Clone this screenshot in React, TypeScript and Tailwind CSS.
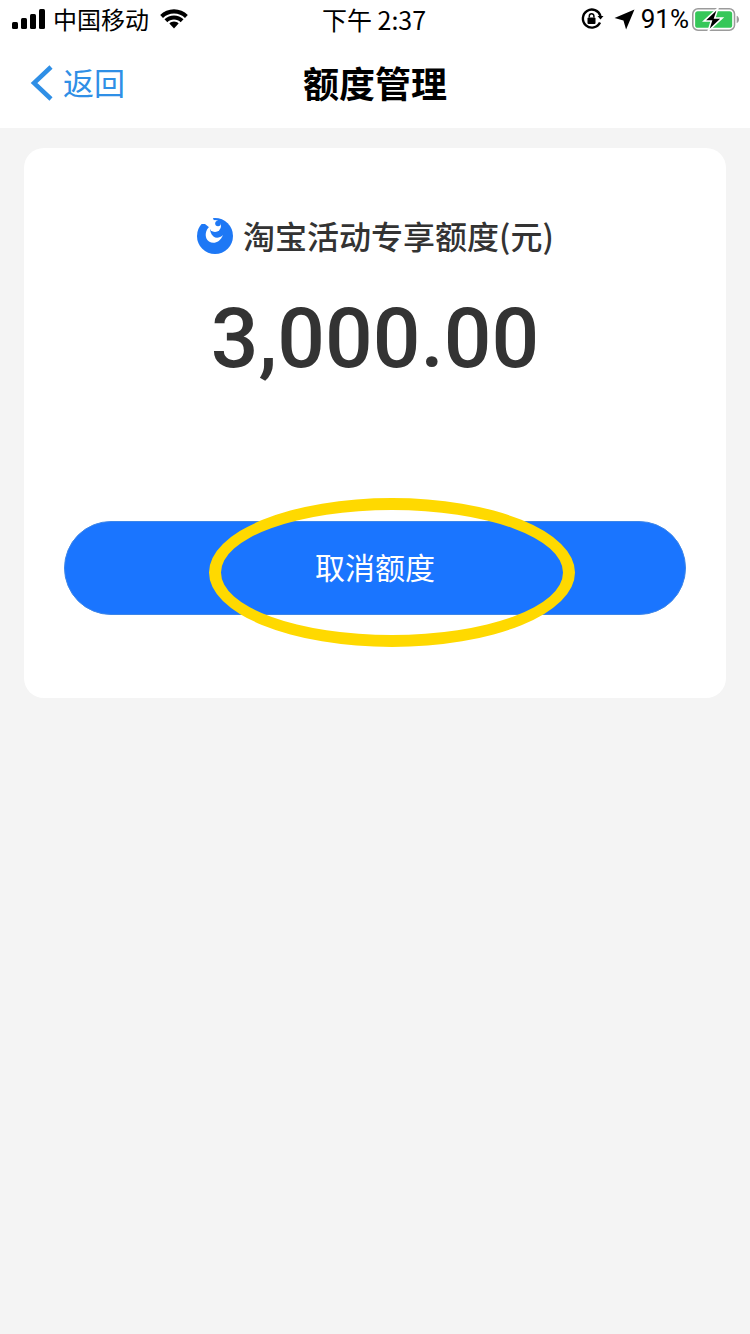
const CJK = "font-['Noto_Sans_CJK_SC','Noto_Sans',sans-serif]"

function StatusBar() {
  return (
    <div className="flex h-10 items-center justify-between pl-3 pr-[10px] text-black">
      <div className="flex w-[240px] -translate-y-px items-center">
        <svg width="34" height="20" viewBox="0 0 34 20" fill="#000">
          <rect x="0" y="13" width="6" height="7" rx="1.5" />
          <rect x="9" y="9" width="6" height="11" rx="1.5" />
          <rect x="18" y="5" width="6" height="15" rx="1.5" />
          <rect x="27" y="0" width="6" height="20" rx="1.5" />
        </svg>
        <span className={`ml-[7px] text-[24px] leading-none ${CJK}`}>中国移动</span>
        <svg className="ml-[10px] translate-y-px" width="30" height="22" viewBox="0 0 30 22" fill="#000">
          <path d="M15 4.500c4.300 0 8.200 1.700 11 4.500l2.800-3C25.200 2.400 20.400 0.300 15 0.300S4.800 2.400 1.200 6L4 9c2.800-2.800 6.700-4.500 11-4.500z" />
          <path d="M15 10.500c2.600 0 5 1 6.700 2.700l2.800-3C22 7.800 18.700 6.400 15 6.400S8 7.800 5.500 10.200l2.800 3c1.700-1.700 4.100-2.700 6.700-2.700z" />
          <path d="M15 12.500c-1.800 0-3.400.7-4.600 1.900L15 19.500l4.600-5.100c-1.200-1.200-2.800-1.900-4.600-1.900z" />
        </svg>
      </div>
      <span className={`-translate-x-0.5 -translate-y-px text-[25px] leading-none ${CJK}`}>下午 2:37</span>
      <div className="flex w-[240px] -translate-y-px items-center justify-end">
        <svg width="24" height="24" viewBox="0 0 24 24" fill="none">
          <path d="M20 15.500A9 9 0 1 1 20.500 9" stroke="#000" strokeWidth="2.400" />
          <path d="M17.500 9h6l-3 3.500z" fill="#000" />
          <rect x="7.500" y="10.500" width="8" height="6.500" rx="1" fill="#000" />
          <path d="M9.300 10.500V9a2.300 2.300 0 0 1 4.600 0v1.500" stroke="#000" strokeWidth="1.500" />
        </svg>
        <svg className="ml-[10px]" width="21" height="21" viewBox="0 0 20 20" fill="#000">
          <path d="M19.500 0.500L11.500 19.500 9 11 0.500 8.500z" />
        </svg>
        <span className="ml-[6px] font-['Roboto',sans-serif] text-[26px] leading-none">91%</span>
        <svg className="ml-[3px]" width="48" height="23" viewBox="0 0 46 22">
          <rect x="0.750" y="0.750" width="40" height="20.500" rx="5" fill="none" stroke="#9b9b9b" strokeWidth="1.500" />
          <rect x="3" y="3" width="35.500" height="16" rx="2.500" fill="#36c759" />
          <path d="M42.800 7.500c1.500.5 2.200 2 2.200 3.500s-.7 3-2.200 3.500z" fill="#9b9b9b" />
          <path d="M25 0L11.500 12.500h7L15.500 22 29 9.500h-7.200z" fill="#000" stroke="#fff" strokeWidth="1.500" />
        </svg>
      </div>
    </div>
  )
}

function NavBar() {
  return (
    <div className="relative flex h-[88px] items-center justify-center">
      <div className="absolute left-[30px] top-[25px] flex items-center text-[#2f8fe6]">
        <svg width="24" height="36" viewBox="0 0 24 36" fill="none">
          <path d="M21 2L4 18l17 16" stroke="#2f8fe6" strokeWidth="4.500" />
        </svg>
        <span className={`ml-[9px] -translate-y-0.5 text-[31px] leading-none ${CJK}`}>返回</span>
      </div>
      <h1 className={`-translate-y-0.5 text-[36px] font-bold leading-none text-black ${CJK}`}>额度管理</h1>
    </div>
  )
}

function AlipayLogo() {
  return (
    <svg width="38" height="38" viewBox="0 0 38 38">
      <circle cx="19" cy="20" r="18" fill="#1e78f5" />
      <path d="M0 0H16L19 7 14 12 9 8 5 8z" fill="#fff" />
      <circle cx="19" cy="10" r="6" fill="#fff" />
      <circle cx="22" cy="7.500" r="2.800" fill="#1e78f5" />
      <path d="M14 10C9 14 8 22 13 25.500c4.500 3 11 1 14-6.500-3 3-7 3.500-9.500 1.500-2.500-2-4-6-3.500-10.500z" fill="#fff" />
    </svg>
  )
}

export default function App() {
  return (
    <div className="relative min-h-[1334px] w-[750px] overflow-hidden bg-[#f4f4f4]">
      <div className="bg-white">
        <StatusBar />
        <NavBar />
      </div>

      <div className="mx-6 mt-5 h-[550px] rounded-[20px] bg-white pt-[67px]">
        <div className="flex h-10 items-center justify-center">
          <AlipayLogo />
          <span className={`ml-[9px] text-[32px] font-medium leading-none text-[#333] ${CJK}`}>淘宝活动专享额度(元)</span>
        </div>
        <div className="mt-[34px] text-center font-['Roboto',sans-serif] text-[84px] font-medium leading-[100px] text-[#333]">
          3,000.00
        </div>
        <button className={`mx-10 mt-[132px] flex h-[94px] w-[622px] items-center justify-center rounded-[47px] border border-[#3d86e8] bg-[#1a75ff] pb-1 text-[30px] text-white ${CJK}`}>
          取消额度
        </button>
      </div>

      {/* hand-drawn highlight over the button */}
      <div className="absolute left-[209px] top-[498px] h-[149px] w-[366px] rounded-[50%] border-[12px] border-[#ffd900]" />
    </div>
  )
}
